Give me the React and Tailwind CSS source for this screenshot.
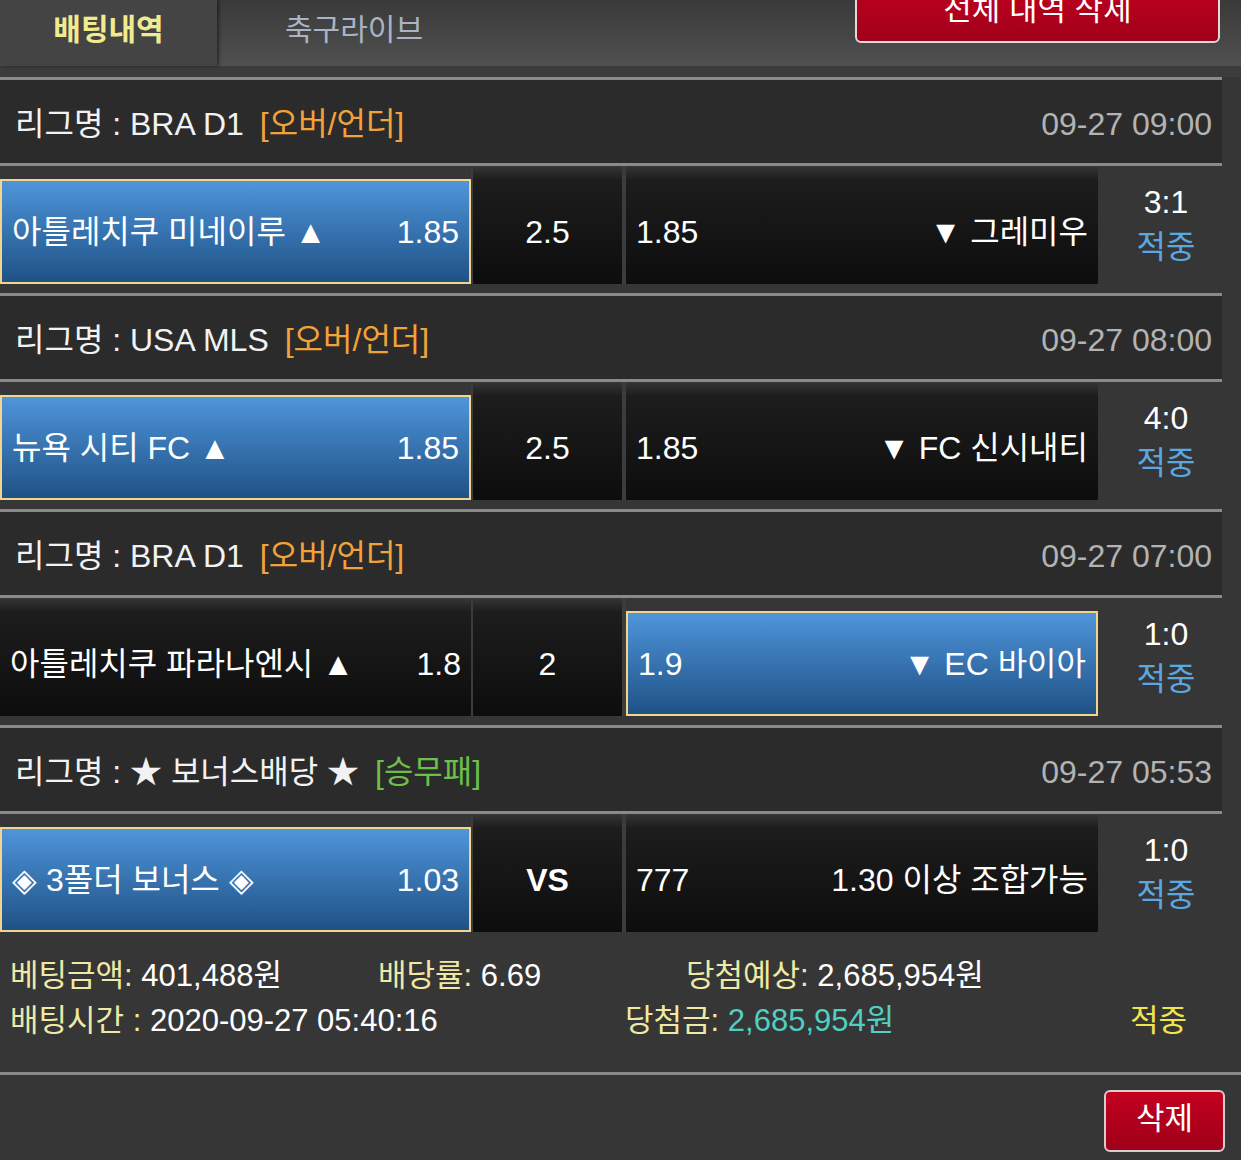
const FONT = { fontFamily: '"Liberation Sans", "Noto Sans CJK KR", sans-serif' };

const bets = [
  {
    league: 'BRA D1',
    type: '[오버/언더]',
    typeColor: 'text-[#f2a23a]',
    time: '09-27 09:00',
    home: '아틀레치쿠 미네이루 ▲',
    homeOdds: '1.85',
    line: '2.5',
    awayOdds: '1.85',
    away: '▼ 그레미우',
    pick: 'home',
    score: '3:1',
  },
  {
    league: 'USA MLS',
    type: '[오버/언더]',
    typeColor: 'text-[#f2a23a]',
    time: '09-27 08:00',
    home: '뉴욕 시티 FC ▲',
    homeOdds: '1.85',
    line: '2.5',
    awayOdds: '1.85',
    away: '▼ FC 신시내티',
    pick: 'home',
    score: '4:0',
  },
  {
    league: 'BRA D1',
    type: '[오버/언더]',
    typeColor: 'text-[#f2a23a]',
    time: '09-27 07:00',
    home: '아틀레치쿠 파라나엔시 ▲',
    homeOdds: '1.8',
    line: '2',
    awayOdds: '1.9',
    away: '▼ EC 바이아',
    pick: 'away',
    score: '1:0',
  },
  {
    league: '★ 보너스배당 ★',
    type: '[승무패]',
    typeColor: 'text-[#6cc04a]',
    time: '09-27 05:53',
    home: '◈ 3폴더 보너스 ◈',
    homeOdds: '1.03',
    line: 'VS',
    awayOdds: '777',
    away: '1.30 이상 조합가능',
    pick: 'home',
    score: '1:0',
  },
];

function Cell({ selected, width, children }) {
  if (selected) {
    return (
      <div className={`${width} h-[118px] pt-[13px]`}>
        <div className="h-full flex items-center justify-between px-[10px] border-2 border-[#f3d48c] bg-gradient-to-b from-[#4f95db] to-[#1f5286]">
          {children}
        </div>
      </div>
    );
  }
  return (
    <div className={`${width} h-[118px] pt-[13px] bg-gradient-to-b from-[#363636] via-[#1d1d1d] via-[12%] to-[#0d0d0d]`}>
      <div className="h-full flex items-center justify-between px-[10px]">{children}</div>
    </div>
  );
}

function BetBlock({ bet }) {
  return (
    <div className="w-[1222px]">
      <div className="h-[3px] bg-[#8a8a8a]" />
      <div className="h-[83px] bg-[#2b2b2b] flex items-center justify-between pl-[15px] pr-[10px] pt-[5px]">
        <div className="flex items-center gap-[16px]">
          <span className="text-[#f2f2f2]">리그명 : {bet.league}</span>
          <span className={bet.typeColor}>{bet.type}</span>
        </div>
        <span className="text-[#b3b3b3]">{bet.time}</span>
      </div>
      <div className="h-[3px] bg-[#8a8a8a]" />
      <div className="h-[127px] flex items-start">
        <Cell selected={bet.pick === 'home'} width="w-[471px]">
          <span className="text-white">{bet.home}</span>
          <span className="text-white">{bet.homeOdds}</span>
        </Cell>
        <div className="w-[2px] h-[118px] bg-[#3c3c3c]" />
        <div className="w-[149px] h-[118px] pt-[13px] bg-gradient-to-b from-[#363636] via-[#1d1d1d] via-[12%] to-[#0d0d0d]">
          <div className={`h-full flex items-center justify-center text-white ${bet.line === 'VS' ? 'font-bold' : ''}`}>
            {bet.line}
          </div>
        </div>
        <div className="w-[4px] h-[118px] bg-[#3c3c3c]" />
        <Cell selected={bet.pick === 'away'} width="w-[472px]">
          <span className="text-white">{bet.awayOdds}</span>
          <span className="text-white">{bet.away}</span>
        </Cell>
        <div className="w-[124px] h-[118px] pl-[12px] flex flex-col items-center justify-center leading-[45px]">
          <span className="text-white">{bet.score}</span>
          <span className="text-[#5aa8e2]">적중</span>
        </div>
      </div>
    </div>
  );
}

export default function App() {
  return (
    <div className="w-[1241px] min-h-[1160px] bg-[#363636] text-[32px] overflow-hidden" style={FONT}>
      {/* tab bar */}
      <div className="h-[66px] flex bg-gradient-to-b from-[#3a3a3a] to-[#505050]">
        <div className="w-[217px] h-full pb-[8px] flex items-center justify-center bg-[#444444] shadow-[2px_0_3px_rgba(0,0,0,0.45)] text-[30px] font-bold text-[#f1eb8f]">
          배팅내역
        </div>
        <div className="ml-[68px] h-full pb-[8px] flex items-center text-[30px] text-[#a9b3c4]">축구라이브</div>
        <div className="ml-auto mr-[21px] -mt-[20px] w-[365px] h-[63px] pb-[2px] rounded-[6px] border-2 border-[#e6d6d6] bg-gradient-to-b from-[#c2001f] to-[#a0001a] flex items-center justify-center text-[31px] text-white">
          전체 내역 삭제
        </div>
      </div>
      <div className="h-[11px] bg-[#3c3c3c]" />

      {bets.map((bet, i) => (
        <BetBlock key={i} bet={bet} />
      ))}

      {/* summary */}
      <div className="pl-[10px] pt-[12px] text-[31px] leading-[45px]">
        <div className="flex">
          <div className="w-[368px]">
            <span className="text-[#efe9a6]">베팅금액:</span> <span className="text-white">401,488원</span>
          </div>
          <div className="w-[308px]">
            <span className="text-[#efe9a6]">배당률:</span> <span className="text-white">6.69</span>
          </div>
          <div>
            <span className="text-[#efe9a6]">당첨예상:</span> <span className="text-white">2,685,954원</span>
          </div>
        </div>
        <div className="flex">
          <div className="w-[615px]">
            <span className="text-[#efe9a6]">배팅시간 :</span> <span className="text-white">2020-09-27 05:40:16</span>
          </div>
          <div className="w-[505px]">
            <span className="text-[#efe9a6]">당첨금:</span> <span className="text-[#4fd0c2]">2,685,954원</span>
          </div>
          <div className="text-[#f3e44c]">적중</div>
        </div>
      </div>
      <div className="mt-[29px] h-[3px] bg-[#8a8a8a]" />
      <div className="flex justify-end pr-[16px] pt-[15px]">
        <div className="w-[121px] h-[62px] pb-[4px] rounded-[6px] border-2 border-[#d9cccc] bg-gradient-to-b from-[#c2001f] to-[#a0001a] flex items-center justify-center text-[31px] text-white">
          삭제
        </div>
      </div>
    </div>
  );
}
